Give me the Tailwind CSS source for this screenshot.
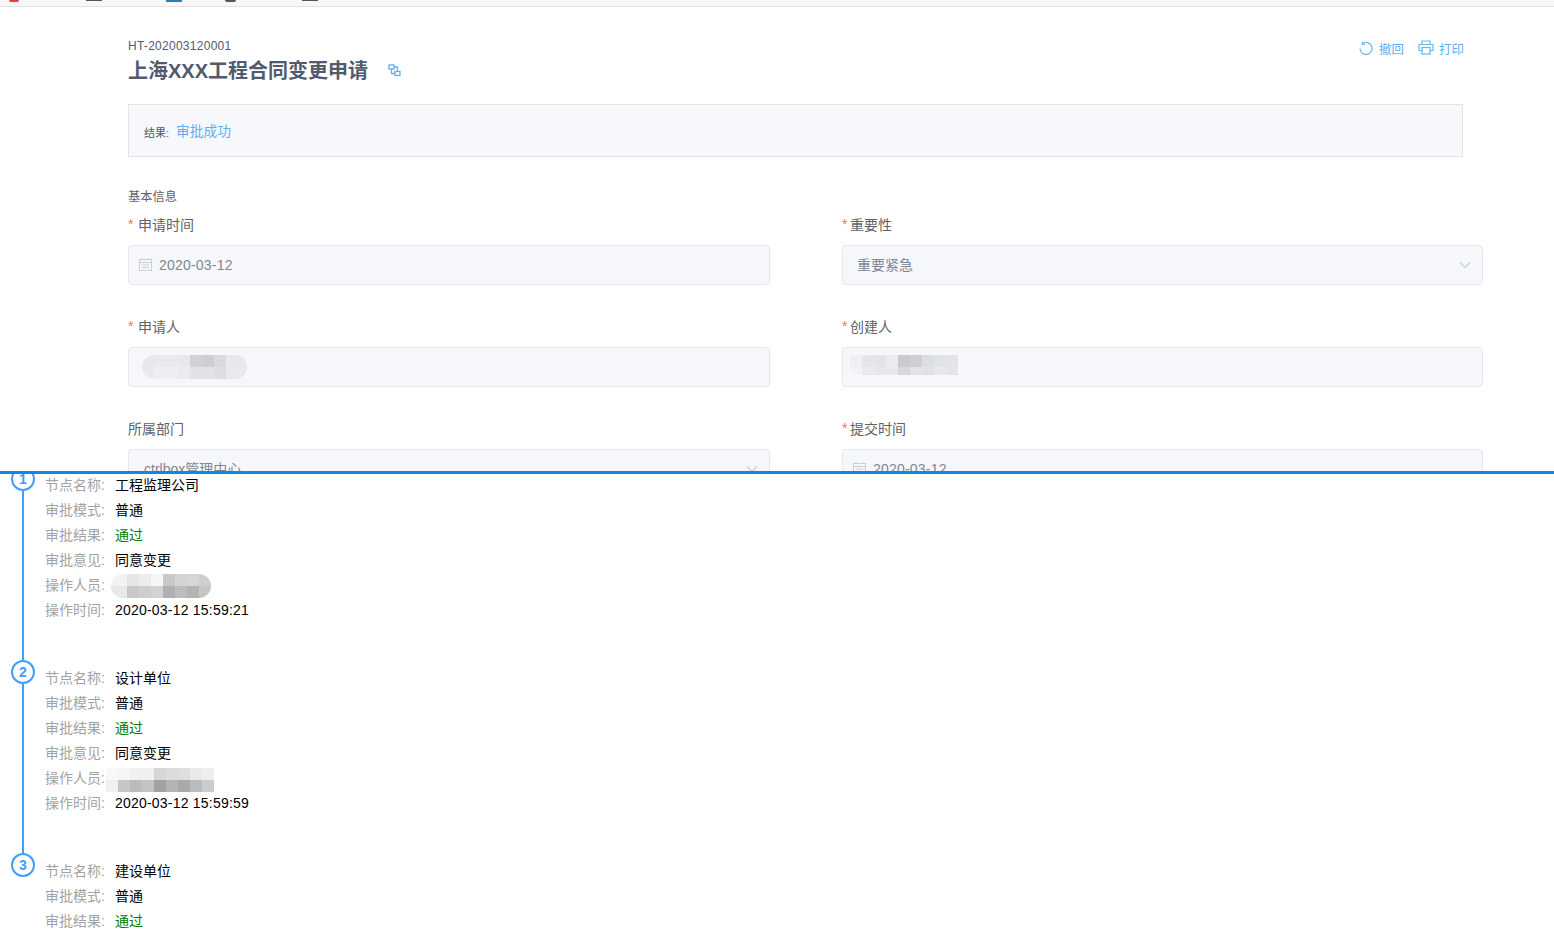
<!DOCTYPE html>
<html lang="zh-CN">
<head>
<meta charset="utf-8">
<title>上海XXX工程合同变更申请</title>
<script src="https://cdn.jsdelivr.net/npm/@tailwindcss/browser@4"></script>
</head>
<body class="bg-white font-['Liberation_Sans','Noto_Sans_CJK_SC',sans-serif] overflow-hidden">
<div class="h-[934px] w-[1554px] flex flex-col overflow-hidden">
  <!-- top strip -->
  <div class="h-[7px] shrink-0 bg-[#f8f8f8] border-b border-[#e2e2e2] flex items-start">
    <div class="ml-[9px] w-[10px] h-[2px] bg-[#e8394a] rounded-b-full"></div>
    <div class="ml-[67px] w-[16px] h-[1px] bg-[#555]"></div>
    <div class="ml-[64px] w-[16px] h-[2px] bg-[#2a7fb0]"></div>
    <div class="ml-[43px] w-[11px] h-[2px] bg-[#555] rounded-b-full"></div>
    <div class="ml-[66px] w-[16px] h-[1px] bg-[#555]"></div>
  </div>

  <!-- upper pane -->
  <div class="h-[464px] shrink-0 overflow-hidden pl-[128px] pr-[71px] text-[#606266]">
    <div class="w-[1335px] h-[97px] flex justify-between">
      <div class="pt-[32px]">
        <div class="text-[12px] leading-[14px] tracking-[0.27px] text-[#515a6e]">HT-202003120001</div>
        <div class="flex items-center mt-[5px]">
          <h1 class="text-[20px] leading-[26px] font-bold text-[#515a6e]">上海XXX工程合同变更申请</h1>
          <svg class="ml-[20px] mt-[-2px]" width="13" height="13" viewBox="0 0 13 13" fill="none" stroke="#5fb0ef" stroke-width="1.3"><rect x="1" y="1" width="5" height="4"/><rect x="7" y="7.500" width="5" height="4"/><path d="M3.500 5v4.500H7M6 3h3.500v4.500"/></svg>
        </div>
      </div>
      <div class="flex items-start pt-[34px] text-[12.500px] leading-[18px] text-[#5fb0ef] mr-[-1px]">
        <div class="flex items-start">
          <svg class="mr-[6px]" width="14" height="15" viewBox="0 0 14 15" fill="none" stroke="#6cb6ef" stroke-width="1.2"><path d="M3.200 2.800A6 6 0 1 1 1 7.500"/><path d="M3.400 0.800v2.500H6"/></svg>
          <span>撤回</span>
        </div>
        <div class="flex items-start ml-[14px]">
          <svg class="mr-[5px] mt-[-1px]" width="16" height="15" viewBox="0 0 16 15" fill="none" stroke="#6cb6ef" stroke-width="1.2"><path d="M4 4V1h8v3M4 10.500H1V4.500h14v6h-3"/><rect x="4" y="7.500" width="8" height="6.500"/></svg>
          <span>打印</span>
        </div>
      </div>
    </div>

    <div class="w-[1335px] h-[53px] bg-[#f7f8fb] border border-[#e3e4ea] flex items-center pl-[15px] pt-[3px]">
      <span class="text-[11px] text-[#515a6e] mt-[2px] w-[32px]">结果:</span>
      <span class="text-[13.750px] text-[#5fb0ef]">审批成功</span>
    </div>

    <div class="mt-[32px] text-[12.250px] leading-[16px] text-[#606266]">基本信息</div>

    <div class="grid grid-cols-[642px_641px] gap-x-[72px] mt-[11px]">
      <div class="h-[102px]">
        <div class="h-[29px] text-[14px] leading-[18px] flex items-start"><span class="text-[#f56c6c] w-[10px] leading-[16px]">*</span>申请时间</div>
        <div class="h-[40px] bg-[#f5f7fa] border border-[#e4e7ed] rounded flex items-center pl-[10px] text-[14px] tracking-[0.2px] text-[#808695]">
          <svg class="mr-[7px] mt-[-1px]" width="13" height="13" viewBox="0 0 13 13" fill="none" stroke="#c9ced8"><rect x="0.500" y="1.500" width="12" height="11"/><path d="M0.500 4.500h12M3 0v2M10 0v2M3 7h7M3 9.500h7" /></svg>
          2020-03-12
        </div>
      </div>
      <div class="h-[102px]">
        <div class="h-[29px] text-[14px] leading-[18px] flex items-start"><span class="text-[#f56c6c] w-[8px] leading-[16px]">*</span>重要性</div>
        <div class="h-[40px] bg-[#f5f7fa] border border-[#e4e7ed] rounded flex items-center justify-between pl-[14px] pr-[11px] text-[14px] text-[#808695]">
          重要紧急
          <svg width="12" height="8" viewBox="0 0 12 8" fill="none" stroke="#c6ccd8" stroke-width="1.200"><path d="M1 1.500l5 5 5-5"/></svg>
        </div>
      </div>

      <div class="h-[102px]">
        <div class="h-[29px] text-[14px] leading-[18px] flex items-start"><span class="text-[#f56c6c] w-[10px] leading-[16px]">*</span>申请人</div>
        <div class="h-[40px] bg-[#f5f7fa] border border-[#e4e7ed] rounded flex items-center pl-[13px]">
          <div class="flex flex-col w-[105px] h-[24px] rounded-[12px] overflow-hidden mt-[-1px]">
            <div class="flex h-[12px]">
              <div class="w-[12px] bg-[#e6e8ec]"></div><div class="w-[24px] bg-[#e8eaed]"></div><div class="w-[12px] bg-[#e6e8ec]"></div><div class="w-[12px] bg-[#d0d2d6]"></div><div class="w-[12px] bg-[#cdcfd4]"></div><div class="w-[12px] bg-[#d8dade]"></div><div class="w-[21px] bg-[#e6e8ec]"></div>
            </div>
            <div class="flex h-[12px]">
              <div class="w-[12px] bg-[#e8eaee]"></div><div class="w-[24px] bg-[#eceef1]"></div><div class="w-[12px] bg-[#e9ebee]"></div><div class="w-[24px] bg-[#e0e2e5]"></div><div class="w-[12px] bg-[#dcdee2]"></div><div class="w-[21px] bg-[#e8eaed]"></div>
            </div>
          </div>
        </div>
      </div>
      <div class="h-[102px]">
        <div class="h-[29px] text-[14px] leading-[18px] flex items-start"><span class="text-[#f56c6c] w-[8px] leading-[16px]">*</span>创建人</div>
        <div class="h-[40px] bg-[#f5f7fa] border border-[#e4e7ed] rounded flex items-center pl-[7px]">
          <div class="flex flex-col w-[108px] h-[20px] overflow-hidden rounded-bl-[8px] mt-[-4px]">
            <div class="flex h-[12px]">
              <div class="w-[12px] bg-[#eef0f3]"></div><div class="w-[12px] bg-[#e4e6e9]"></div><div class="w-[12px] bg-[#e2e4e7]"></div><div class="w-[12px] bg-[#eaecef]"></div><div class="w-[12px] bg-[#cacbce]"></div><div class="w-[12px] bg-[#cfd0d3]"></div><div class="w-[12px] bg-[#dcdee1]"></div><div class="w-[12px] bg-[#e0e3e6]"></div><div class="w-[12px] bg-[#e2e4e8]"></div>
            </div>
            <div class="flex h-[8px]">
              <div class="w-[12px] bg-[#f0f2f5]"></div><div class="w-[12px] bg-[#e8eaed]"></div><div class="w-[24px] bg-[#e6e8eb]"></div><div class="w-[12px] bg-[#d6d8da]"></div><div class="w-[12px] bg-[#e2e3e5]"></div><div class="w-[12px] bg-[#dfe1e4]"></div><div class="w-[12px] bg-[#e6e8eb]"></div><div class="w-[12px] bg-[#e3e5e9]"></div>
            </div>
          </div>
        </div>
      </div>

      <div class="h-[102px]">
        <div class="h-[29px] text-[14px] leading-[18px]">所属部门</div>
        <div class="h-[40px] bg-[#f5f7fa] border border-[#e4e7ed] rounded flex items-center justify-between pl-[15px] pr-[11px] text-[14px] text-[#808695]">
          ctrlbox管理中心
          <svg width="12" height="8" viewBox="0 0 12 8" fill="none" stroke="#c6ccd8" stroke-width="1.200"><path d="M1 1.500l5 5 5-5"/></svg>
        </div>
      </div>
      <div class="h-[102px]">
        <div class="h-[29px] text-[14px] leading-[18px] flex items-start"><span class="text-[#f56c6c] w-[8px] leading-[16px]">*</span>提交时间</div>
        <div class="h-[40px] bg-[#f5f7fa] border border-[#e4e7ed] rounded flex items-center pl-[10px] text-[14px] tracking-[0.2px] text-[#808695]">
          <svg class="mr-[7px] mt-[-1px]" width="13" height="13" viewBox="0 0 13 13" fill="none" stroke="#c9ced8"><rect x="0.500" y="1.500" width="12" height="11"/><path d="M0.500 4.500h12M3 0v2M10 0v2M3 7h7M3 9.500h7" /></svg>
          2020-03-12
        </div>
      </div>
    </div>
  </div>

  <!-- divider -->
  <div class="h-[3px] shrink-0 bg-[#0f86ec]"></div>

  <!-- lower pane -->
  <div class="flex-1 overflow-hidden relative text-[14px] text-black">
    <div class="mt-[-7px] pl-[11px]">

      <div class="h-[193px] flex">
        <div class="w-[24px] shrink-0 flex flex-col items-center">
          <div class="w-[24px] h-[24px] shrink-0 rounded-full border-2 border-[#409eff] text-[#409eff] font-bold text-[14px] leading-[20px] text-center">1</div>
          <div class="w-[2px] flex-1 bg-[#409eff]"></div>
        </div>
        <div class="ml-[10px] pt-[6px]">
          <div class="flex h-[25px] items-center"><span class="w-[70px] text-[#a3a3a3]">节点名称:</span>工程监理公司</div>
          <div class="flex h-[25px] items-center"><span class="w-[70px] text-[#a3a3a3]">审批模式:</span>普通</div>
          <div class="flex h-[25px] items-center"><span class="w-[70px] text-[#a3a3a3]">审批结果:</span><span class="text-[#008000]">通过</span></div>
          <div class="flex h-[25px] items-center"><span class="w-[70px] text-[#a3a3a3]">审批意见:</span>同意变更</div>
          <div class="flex h-[25px] items-center"><span class="w-[66px] text-[#a3a3a3]">操作人员:</span>
            <div class="flex flex-col w-[100px] h-[24px] rounded-[12px] overflow-hidden">
              <div class="flex h-[12px]"><div class="w-[16px] bg-[#f2f2f2]"></div><div class="w-[12px] bg-[#e6e6e6]"></div><div class="w-[12px] bg-[#ececec]"></div><div class="w-[12px] bg-[#f6f6f6]"></div><div class="w-[12px] bg-[#c8c8c8]"></div><div class="w-[12px] bg-[#d4d4d4]"></div><div class="w-[12px] bg-[#d6d6d6]"></div><div class="w-[12px] bg-[#cecece]"></div></div>
              <div class="flex h-[12px]"><div class="w-[16px] bg-[#e8e8e8]"></div><div class="w-[12px] bg-[#c8c8c8]"></div><div class="w-[12px] bg-[#cecece]"></div><div class="w-[12px] bg-[#d2d2d2]"></div><div class="w-[12px] bg-[#b0b0b0]"></div><div class="w-[12px] bg-[#bcbcbc]"></div><div class="w-[12px] bg-[#b4b4b4]"></div><div class="w-[12px] bg-[#c6c6c6]"></div></div>
            </div>
          </div>
          <div class="flex h-[25px] items-center"><span class="w-[70px] text-[#a3a3a3]">操作时间:</span><span class="tracking-[0.21px]">2020-03-12 15:59:21</span></div>
        </div>
      </div>

      <div class="h-[193px] flex">
        <div class="w-[24px] shrink-0 flex flex-col items-center">
          <div class="w-[24px] h-[24px] shrink-0 rounded-full border-2 border-[#409eff] text-[#409eff] font-bold text-[14px] leading-[20px] text-center">2</div>
          <div class="w-[2px] flex-1 bg-[#409eff]"></div>
        </div>
        <div class="ml-[10px] pt-[6px]">
          <div class="flex h-[25px] items-center"><span class="w-[70px] text-[#a3a3a3]">节点名称:</span>设计单位</div>
          <div class="flex h-[25px] items-center"><span class="w-[70px] text-[#a3a3a3]">审批模式:</span>普通</div>
          <div class="flex h-[25px] items-center"><span class="w-[70px] text-[#a3a3a3]">审批结果:</span><span class="text-[#008000]">通过</span></div>
          <div class="flex h-[25px] items-center"><span class="w-[70px] text-[#a3a3a3]">审批意见:</span>同意变更</div>
          <div class="flex h-[25px] items-center"><span class="w-[61px] text-[#a3a3a3]">操作人员:</span>
            <div class="flex flex-col w-[108px] h-[24px] overflow-hidden mt-[2px]">
              <div class="flex h-[12px]"><div class="w-[12px] bg-[#f8f8f8]"></div><div class="w-[12px] bg-[#f6f6f6]"></div><div class="w-[24px] bg-[#f0f0f0]"></div><div class="w-[12px] bg-[#d6d6d6]"></div><div class="w-[12px] bg-[#dcdcdc]"></div><div class="w-[12px] bg-[#dedede]"></div><div class="w-[12px] bg-[#eaeaea]"></div><div class="w-[12px] bg-[#eeeeee]"></div></div>
              <div class="flex h-[12px]"><div class="w-[12px] bg-[#f0f0f0]"></div><div class="w-[12px] bg-[#c6c6c6]"></div><div class="w-[12px] bg-[#bcbcbc]"></div><div class="w-[12px] bg-[#c4c4c2]"></div><div class="w-[12px] bg-[#a2a2a0]"></div><div class="w-[12px] bg-[#b4b4b4]"></div><div class="w-[12px] bg-[#aaaaaa]"></div><div class="w-[12px] bg-[#b8bcbe]"></div><div class="w-[12px] bg-[#cccccc]"></div></div>
            </div>
          </div>
          <div class="flex h-[25px] items-center"><span class="w-[70px] text-[#a3a3a3]">操作时间:</span><span class="tracking-[0.21px]">2020-03-12 15:59:59</span></div>
        </div>
      </div>

      <div class="h-[193px] flex">
        <div class="w-[24px] shrink-0 flex flex-col items-center">
          <div class="w-[24px] h-[24px] shrink-0 rounded-full border-2 border-[#409eff] text-[#409eff] font-bold text-[14px] leading-[20px] text-center">3</div>
        </div>
        <div class="ml-[10px] pt-[6px]">
          <div class="flex h-[25px] items-center"><span class="w-[70px] text-[#a3a3a3]">节点名称:</span>建设单位</div>
          <div class="flex h-[25px] items-center"><span class="w-[70px] text-[#a3a3a3]">审批模式:</span>普通</div>
          <div class="flex h-[25px] items-center"><span class="w-[70px] text-[#a3a3a3]">审批结果:</span><span class="text-[#008000]">通过</span></div>
        </div>
      </div>

    </div>
  </div>
</div>
</body>
</html>
